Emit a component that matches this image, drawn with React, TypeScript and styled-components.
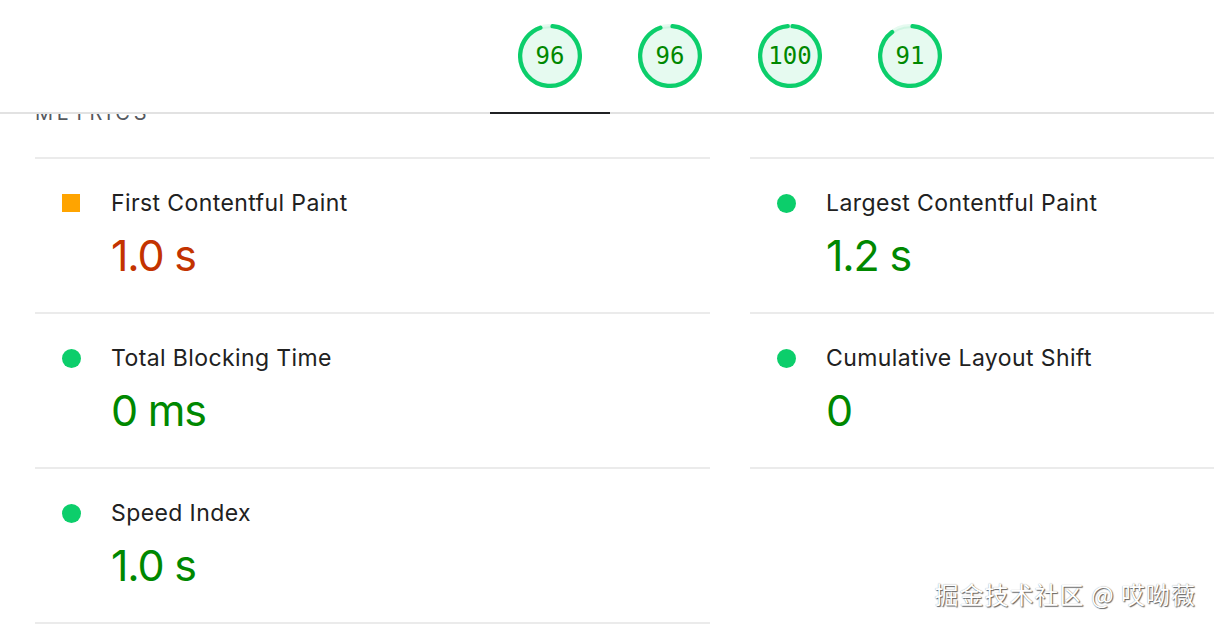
import React from "react";
import styled, { createGlobalStyle } from "styled-components";

const GlobalStyle = createGlobalStyle`
  html, body {
    margin: 0;
    padding: 0;
    background: #fff;
    overflow: hidden;
  }
  body {
    font-family: Inter, "Noto Sans", "Liberation Sans", sans-serif;
    color: #212121;
  }
`;

const Page = styled.div`
  position: relative;
  width: 1214px;
  height: 628px;
  overflow: hidden;
`;

const Header = styled.header`
  position: relative;
  z-index: 1;
  box-sizing: border-box;
  height: 114px;
  background: #fff;
  border-bottom: 2px solid #e2e2e2;
  display: flex;
  align-items: flex-start;
  padding-left: 490px;
`;

const Tab = styled.div<{ $active?: boolean }>`
  box-sizing: border-box;
  width: 120px;
  height: 114px;
  border-bottom: 2px solid ${(p) => (p.$active ? "#202124" : "transparent")};
  display: flex;
  align-items: center;
  justify-content: center;
`;

const GaugeWrap = styled.div`
  position: relative;
  width: 64px;
  height: 64px;
  display: flex;
  align-items: center;
  justify-content: center;

  svg {
    position: absolute;
    inset: 0;
  }
`;

const GaugeLabel = styled.span`
  position: relative;
  font-family: "DejaVu Sans Mono", "Liberation Mono", monospace;
  font-size: 24px;
  line-height: 1;
  color: #008800;
`;

const Section = styled.section`
  margin-top: -11px;
  padding-left: 35px;
`;

const GroupTitle = styled.h2`
  margin: 0 0 34px;
  font-size: 20px;
  line-height: 20px;
  font-weight: 400;
  letter-spacing: 3.8px;
  text-transform: uppercase;
  color: #55595e;
`;

const MetricGrid = styled.div`
  display: grid;
  grid-template-columns: 675px 675px;
  column-gap: 40px;
  width: max-content;
`;

const Metric = styled.div<{ $first?: boolean }>`
  box-sizing: border-box;
  height: ${(p) => (p.$first ? "157px" : "155px")};
  border-bottom: 2px solid #ebebeb;
  border-top: ${(p) => (p.$first ? "2px solid #ebebeb" : "none")};
  display: grid;
  grid-template-columns: 76px 1fr;
  grid-template-rows: 28px 48px;
  row-gap: 14px;
  padding-top: 30px;
`;

const IconCell = styled.div`
  display: flex;
  align-items: center;
  padding-left: 27px;
`;

const Square = styled.span`
  width: 18px;
  height: 18px;
  background: #ffa400;
`;

const Dot = styled.span`
  width: 19px;
  height: 19px;
  border-radius: 50%;
  background: #0cce6b;
`;

const MetricTitle = styled.div`
  font-size: 23px;
  line-height: 28px;
  letter-spacing: 0.4px;
  color: #212121;
`;

const MetricValue = styled.div<{ $status: "pass" | "average" }>`
  grid-column: 2;
  font-size: 43px;
  line-height: 48px;
  letter-spacing: -1.2px;
  color: ${(p) => (p.$status === "pass" ? "#008800" : "#c33300")};
`;

const Watermark = styled.div`
  position: absolute;
  right: 18px;
  bottom: 20px;
  z-index: 2;
  font-family: "Noto Sans CJK SC", "Noto Sans", sans-serif;
  font-size: 24px;
  line-height: 28px;
  letter-spacing: 1px;
  color: #fff;
  text-shadow: 1px 1px 1px rgba(0, 0, 0, 0.6), 0 0 1px rgba(0, 0, 0, 0.4);
`;

const R = 56;
const C = 2 * Math.PI * R;
const STROKE = 8;
const GAP = 0.75;

const Gauge: React.FC<{ score: number }> = ({ score }) => {
  const p = score / 100;
  const offset = STROKE / 2 + GAP;
  const dash = Math.max(p * C - 2 * offset, 0.01);
  const rot = -90 + (360 * offset) / C;
  return (
    <GaugeWrap>
      <svg viewBox="0 0 120 120" width="64" height="64">
        <circle
          cx="60"
          cy="60"
          r={R}
          fill="rgba(12,206,107,0.1)"
          stroke="rgba(12,206,107,0.1)"
          strokeWidth={STROKE}
        />
        <circle
          cx="60"
          cy="60"
          r={R}
          fill="none"
          stroke="#0cce6b"
          strokeWidth={STROKE}
          strokeLinecap="round"
          strokeDasharray={`${dash} ${C}`}
          transform={`rotate(${rot} 60 60)`}
        />
      </svg>
      <GaugeLabel>{score}</GaugeLabel>
    </GaugeWrap>
  );
};

type MetricData = {
  title: string;
  value: string;
  status: "pass" | "average";
};

const metrics: MetricData[] = [
  { title: "First Contentful Paint", value: "1.0 s", status: "average" },
  { title: "Largest Contentful Paint", value: "1.2 s", status: "pass" },
  { title: "Total Blocking Time", value: "0 ms", status: "pass" },
  { title: "Cumulative Layout Shift", value: "0", status: "pass" },
  { title: "Speed Index", value: "1.0 s", status: "pass" },
];

const scores = [96, 96, 100, 91];

export default function App() {
  return (
    <Page>
      <GlobalStyle />
      <Header>
        {scores.map((s, i) => (
          <Tab key={i} $active={i === 0}>
            <Gauge score={s} />
          </Tab>
        ))}
      </Header>
      <Section>
        <GroupTitle>Metrics</GroupTitle>
        <MetricGrid>
          {metrics.map((m, i) => (
            <Metric key={m.title} $first={i < 2}>
              <IconCell>{m.status === "pass" ? <Dot /> : <Square />}</IconCell>
              <MetricTitle>{m.title}</MetricTitle>
              <MetricValue $status={m.status}>{m.value}</MetricValue>
            </Metric>
          ))}
        </MetricGrid>
      </Section>
      <Watermark>掘金技术社区 @ 哎呦薇</Watermark>
    </Page>
  );
}
